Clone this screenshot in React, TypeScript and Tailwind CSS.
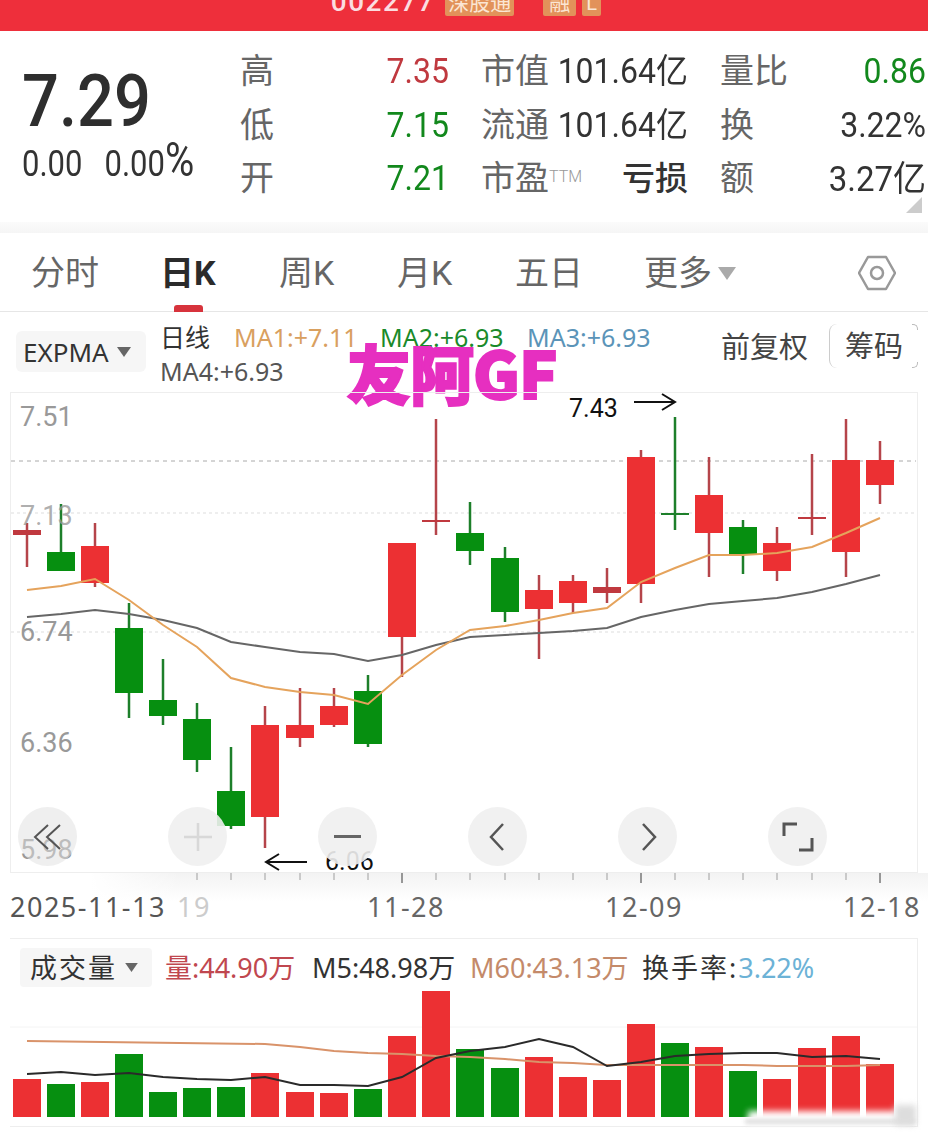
const RED = "#ec3033";
const GREEN = "#068f10";

// x, wick top, body top, body bottom, wick bottom, up?
const candles: [number, number, number, number, number, boolean][] = [
  [27, 523, 530, 535, 567, true],
  [61, 504, 552, 571, 571, false],
  [95, 523, 546, 583, 587, true],
  [129, 603, 628, 693, 718, false],
  [163, 659, 700, 716, 725, false],
  [197, 703, 719, 760, 772, false],
  [231, 747, 791, 826, 829, false],
  [265, 706, 725, 817, 848, true],
  [300, 688, 725, 738, 747, true],
  [334, 688, 706, 725, 727, true],
  [368, 675, 691, 744, 747, false],
  [402, 543, 543, 637, 677, true],
  [436, 419, 520, 522, 535, true],
  [470, 502, 533, 551, 565, false],
  [505, 547, 558, 612, 622, false],
  [539, 575, 590, 609, 659, true],
  [573, 575, 581, 603, 613, true],
  [607, 568, 587, 593, 603, true],
  [641, 450, 457, 584, 603, true],
  [675, 417, 513, 515, 530, false],
  [709, 457, 495, 533, 577, true],
  [743, 520, 527, 554, 574, false],
  [777, 527, 543, 571, 581, true],
  [812, 454, 517, 519, 535, true],
  [846, 419, 460, 552, 577, true],
  [880, 441, 460, 485, 504, true],
];

const ma1 = "27,590 61,586 95,579 129,600 163,625 197,647 231,678 265,687 300,692 334,695 368,704 402,675 436,650 470,630 505,626 539,620 573,613 607,608 641,582 675,568 709,555 743,555 777,553 812,547 846,533 880,518";
const ma2 = "27,617 61,614 95,610 129,614 163,620 197,628 231,642 265,647 300,652 334,654 368,661 402,655 436,645 470,637 505,635 539,633 573,631 607,628 641,617 675,610 709,604 743,601 777,598 812,592 846,584 880,575";

const volumes: [number, number, boolean][] = [
  [27, 1079, true], [61, 1084, false], [95, 1082, true], [129, 1054, false], [163, 1092, false],
  [197, 1088, false], [231, 1087, false], [265, 1073, true], [300, 1092, true], [334, 1093, true],
  [368, 1089, false], [402, 1036, true], [436, 991, true], [470, 1049, false], [505, 1068, false],
  [539, 1057, true], [573, 1077, true], [607, 1080, true], [641, 1024, true], [675, 1043, false],
  [709, 1047, true], [743, 1071, false], [777, 1079, true], [812, 1048, true], [846, 1036, true], [880, 1064, true],
];
const m5 = "27,1074 61,1072 95,1075 129,1073 163,1077 197,1079 231,1080 265,1077 300,1085 334,1085 368,1086 402,1077 436,1058 470,1051 505,1047 539,1039 573,1047 607,1066 641,1062 675,1056 709,1054 743,1053 777,1053 812,1057 846,1056 880,1059";
const m60 = "27,1041 265,1044 300,1047 334,1051 368,1053 402,1054 436,1056 470,1057 505,1059 539,1062 573,1063 607,1065 641,1065 675,1065 709,1065 743,1065 777,1066 812,1066 846,1066 880,1065";

const ticks = [197, 231, 265, 300, 334, 368, 402, 436, 470, 505, 539, 573, 607, 641, 675, 709, 743, 777, 812, 846, 880];

function Caret({ className }: { className: string }) {
  return (
    <svg viewBox="0 0 14 10" className={className}>
      <path d="M0 0h14L7 10z" fill="currentColor" />
    </svg>
  );
}

function Stat({ label, value, color }: { label: string; value: string; color: string }) {
  return (
    <>
      <span className="text-[34px] text-[#666]">{label}</span>
      <span className={`scale-y-[1.12] text-right text-[32px] whitespace-nowrap ${color}`}>{value}</span>
    </>
  );
}

function RoundButton({ x, children, see }: { x: string; children: React.ReactNode; see?: boolean }) {
  return (
    <div className={`absolute top-[414px] flex h-[59px] w-[59px] items-center justify-center rounded-full ${see ? "bg-[#e0e0e0]/50" : "bg-[#f0f0f0]/90"} ${x}`}>
      {children}
    </div>
  );
}

function App() {
  return (
    <div className="h-[1133px] w-[928px] overflow-hidden bg-white font-['Roboto','Noto_Sans_CJK_SC',sans-serif]">
      {/* top bar, cut off by the crop */}
      <div className="flex h-[31px] items-end justify-center overflow-hidden bg-[#ee2f3b] pb-[15px] pl-[4px]">
        <span className="text-[28px] leading-none font-medium tracking-[1.5px] text-[#fbdde0]">002277</span>
        <span className="ml-[10px] rounded-[2px] bg-[#e2925a] px-[3px] text-[21px] leading-[26px] whitespace-nowrap text-[#fbe6d4]">深股通</span>
        <span className="ml-[29px] rounded-[2px] bg-[#e2925a] px-[6px] text-[21px] leading-[26px] text-[#fbe6d4]">融</span>
        <span className="ml-[6px] w-[19px] rounded-[2px] bg-[#e2925a] pl-[4px] text-[20px] leading-[26px] text-[#fbe6d4]">L</span>
      </div>

      {/* quote */}
      <div className="relative flex h-[191px] pl-[22px]">
        <div className="w-[218px] pt-[33px]">
          <div className="origin-top-left scale-y-[1.12] text-[65px] leading-[66px] font-medium text-[#2e2e2e]">7.29</div>
          <div className="mt-[13px] flex scale-y-[1.18] items-baseline gap-[22px] text-[31px] leading-[36px] text-[#333]">
            <span>0.00</span>
            <span>
              0.00<span className="text-[40px] leading-[36px]">%</span>
            </span>
          </div>
        </div>
        <div className="grid h-fit w-[209px] grid-cols-[40px_1fr] pt-[14px] leading-[53.5px]">
          <Stat label="高" value="7.35" color="text-[#c0393f]" />
          <Stat label="低" value="7.15" color="text-[#12881c]" />
          <Stat label="开" value="7.21" color="text-[#12881c]" />
        </div>
        <div className="ml-[32px] grid h-fit w-[207px] grid-cols-[70px_1fr] pt-[14px] leading-[53.5px]">
          <span className="text-[34px] text-[#666]">市值</span>
          <span className="scale-y-[1.08] text-right text-[32px] whitespace-nowrap text-[#333]">101.64亿</span>
          <span className="text-[34px] text-[#666]">流通</span>
          <span className="scale-y-[1.08] text-right text-[32px] whitespace-nowrap text-[#333]">101.64亿</span>
          <span className="text-[34px] whitespace-nowrap text-[#666]">
            市盈<sup className="text-[16px] leading-none font-light text-[#999]">TTM</sup>
          </span>
          <span className="text-right text-[33px] font-medium text-[#333]">亏损</span>
        </div>
        <div className="ml-[32px] grid h-fit w-[206px] grid-cols-[70px_1fr] pt-[14px] leading-[53.5px]">
          <Stat label="量比" value="0.86" color="text-[#12881c]" />
          <Stat label="换" value="3.22%" color="text-[#333]" />
          <span className="text-[34px] text-[#666]">额</span>
          <span className="scale-y-[1.08] text-right text-[33px] whitespace-nowrap text-[#333]">3.27亿</span>
        </div>
        <svg viewBox="0 0 16 16" className="absolute top-[166px] right-[6px] h-[16px] w-[16px]">
          <path d="M16 0v16H0z" fill="#ccc" />
        </svg>
      </div>

      <div className="h-[11px] bg-gradient-to-b from-[#fbfbfb] to-[#f5f5f5]" />

      {/* period tabs */}
      <div className="relative flex h-[79px] items-center border-b border-[#e6e6e6] pt-[2px] text-[34px] leading-none text-[#666]">
        <span className="ml-[31px] w-[129px]">分时</span>
        <span className="w-[119px] font-bold text-[#2b2b2b]">日K</span>
        <span className="w-[118px]">周K</span>
        <span className="w-[118px]">月K</span>
        <span className="w-[129px]">五日</span>
        <span>更多</span>
        <Caret className="ml-[6px] h-[13px] w-[18px] text-[#aaa]" />
        <svg viewBox="0 0 38 38" className="ml-[122px] h-[38px] w-[38px] text-[#999]">
          <path d="M10 3h18l9 16-9 16H10L1 19z" fill="none" stroke="currentColor" strokeWidth="2.5" strokeLinejoin="round" />
          <circle cx="19" cy="19" r="6" fill="none" stroke="currentColor" strokeWidth="2.5" />
        </svg>
        <div className="absolute bottom-[-1px] left-[174px] h-[7px] w-[29px] rounded-t-[3px] bg-[#d7333c]" />
      </div>

      {/* chart legend */}
      <div className="relative flex h-[80px] pl-[16px]">
        <div className="mt-[19px] flex h-[41px] w-[130px] items-center rounded-[6px] bg-[#f6f6f6] pl-[7px] font-['Noto_Sans','Noto_Sans_CJK_SC',sans-serif] text-[26px] leading-none text-[#333]">
          EXPMA
          <Caret className="ml-[8px] h-[10px] w-[14px] text-[#666]" />
        </div>
        <div className="ml-[14px] w-[540px] pt-[8px] font-['Noto_Sans','Noto_Sans_CJK_SC',sans-serif] text-[25px] leading-[34px]">
          <div className="flex">
            <span className="w-[74px] text-[#333]">日线</span>
            <span className="w-[146px] text-[#d9a05f]">MA1:+7.11</span>
            <span className="w-[147px] text-[#1a8a2a]">MA2:+6.93</span>
            <span className="text-[#5b94b8]">MA3:+6.93</span>
          </div>
          <div className="text-[#555]">MA4:+6.93</div>
        </div>
        <span className="mt-[17px] ml-[21px] h-fit text-[29px] leading-[38px] text-[#444]">前复权</span>
        <div className="relative mt-[12px] ml-[21px] flex h-[44px] w-[89px] items-center justify-center rounded-l-[8px] border-l border-[#ccc] pt-[3px] text-[29px] leading-none text-[#444]">
          筹码
          <div className="absolute top-0 right-0 h-[6px] w-[6px] rounded-tr-[5px] border-t border-r border-[#bbb]" />
          <div className="absolute right-0 bottom-0 h-[6px] w-[6px] rounded-br-[5px] border-r border-b border-[#bbb]" />
        </div>
        <span className="absolute top-[24px] left-[347px] font-['Noto_Sans_CJK_SC',sans-serif] text-[64px] leading-[70px] font-black tracking-[-1px] whitespace-nowrap text-[#e62fc0] [-webkit-text-stroke:2px_#e62fc0]">
          友阿GF
        </span>
      </div>

      {/* candlestick chart */}
      <div className="relative mx-[10px] h-[481px] border border-[#eeeeee]">
        <svg viewBox="11 393 905 479" className="absolute inset-0 h-[479px] w-[905px]">
          <line x1="11" x2="916" y1="461" y2="461" stroke="#aaa" strokeWidth="1" strokeDasharray="4 4" />
          <line x1="11" x2="916" y1="513" y2="513" stroke="#ddd" strokeWidth="1" strokeDasharray="3 3" />
          <line x1="11" x2="916" y1="632" y2="632" stroke="#ddd" strokeWidth="1" strokeDasharray="3 3" />
          {candles.map(([x, wt, bt, bb, wb, up], i) => (
            <g key={i}>
              <line x1={x} x2={x} y1={wt} y2={wb} stroke={up ? "#b5444a" : "#1d7f2a"} strokeWidth="2.5" />
              <rect x={x - 14} y={bt} width="28" height={bb - bt} fill={bb - bt < 8 ? (up ? "#c0393f" : "#1d7f2a") : up ? RED : GREEN} />
            </g>
          ))}
          <polyline points={ma2} fill="none" stroke="#666" strokeWidth="2" />
          <polyline points={ma1} fill="none" stroke="#e5a35c" strokeWidth="2" />
          <path d="M634 402h41m-13-8 13 8-13 8" fill="none" stroke="#111" strokeWidth="2" />
          <path d="M307 862h-41m13-8-13 8 13 8" fill="none" stroke="#111" strokeWidth="2" />
        </svg>
        <span className="absolute top-[8px] left-[9px] text-[27px] leading-[32px] text-[#999]">7.51</span>
        <span className="absolute top-[107px] left-[9px] text-[27px] leading-[32px] text-[#999]/80">7.13</span>
        <span className="absolute top-[223px] left-[9px] text-[27px] leading-[32px] text-[#999]">6.74</span>
        <span className="absolute top-[334px] left-[9px] text-[27px] leading-[32px] text-[#999]">6.36</span>
        <span className="absolute top-[441px] left-[9px] text-[27px] leading-[32px] text-[#999]">5.98</span>
        <span className="absolute top-[1px] left-[558px] text-[25px] leading-[30px] text-[#111]">7.43</span>
        <span className="absolute top-[454px] left-[314px] text-[25px] leading-[30px] text-[#111]">6.06</span>

        <RoundButton x="left-[7px]" see>
          <svg viewBox="0 0 30 30" className="h-[30px] w-[30px] text-[#555]">
            <path d="M15 3 2 15l13 12M27 3 14 15l13 12" fill="none" stroke="currentColor" strokeWidth="2" />
          </svg>
        </RoundButton>
        <RoundButton x="left-[157px]">
          <svg viewBox="0 0 28 28" className="h-[28px] w-[28px] text-[#d8d8d8]">
            <path d="M14 0v28M0 14h28" stroke="currentColor" strokeWidth="2.5" />
          </svg>
        </RoundButton>
        <RoundButton x="left-[307px]">
          <div className="h-[3px] w-[27px] bg-[#666]" />
        </RoundButton>
        <RoundButton x="left-[457px]">
          <svg viewBox="0 0 16 28" className="mr-[2px] h-[28px] w-[16px] text-[#555]">
            <path d="M14 1 2 14l12 13" fill="none" stroke="currentColor" strokeWidth="2.5" />
          </svg>
        </RoundButton>
        <RoundButton x="left-[607px]">
          <svg viewBox="0 0 16 28" className="ml-[2px] h-[28px] w-[16px] text-[#555]">
            <path d="m2 1 12 13L2 27" fill="none" stroke="currentColor" strokeWidth="2.5" />
          </svg>
        </RoundButton>
        <RoundButton x="left-[757px]">
          <svg viewBox="0 0 32 30" className="h-[30px] w-[32px] text-[#555]">
            <path d="M15 2H2v12M17 28h13V16" fill="none" stroke="currentColor" strokeWidth="3" />
          </svg>
        </RoundButton>
      </div>

      {/* date axis */}
      <div className="relative h-[65px]">
        <div className="absolute top-0 right-0 left-[90px] h-[28px] bg-gradient-to-b from-[#f3f3f3] to-white" />
        <div className="absolute top-0 left-[90px] h-[28px] w-[90px] bg-gradient-to-r from-white to-transparent" />
        <svg viewBox="0 873 928 10" className="absolute top-0 left-0 h-[10px] w-[928px]">
          {ticks.map((x) => (
            <line
              key={x}
              x1={x}
              x2={x}
              y1="873"
              y2={x === 402 || x === 641 || x === 880 ? 883 : 880}
              stroke={x === 402 || x === 641 || x === 880 ? "#777" : "#bbb"}
              strokeWidth="1.5"
            />
          ))}
        </svg>
        <div className="relative flex pt-[17px] pl-[10px] font-['Noto_Sans',sans-serif] text-[27px] leading-[34px] tracking-[1.5px] text-[#666]">
          <span className="w-[167px] text-[#555]">2025-11-13</span>
          <span className="w-[190px] text-[#ccc]">19</span>
          <span className="w-[238px]">11-28</span>
          <span className="w-[238px]">12-09</span>
          <span>12-18</span>
        </div>
      </div>

      {/* volume panel */}
      <div className="relative mr-[10px] ml-[10px] h-[189px] border-y border-r border-[#eeeeee]">
        <div className="flex pt-[9px] pl-[10px] font-['Noto_Sans','Noto_Sans_CJK_SC',sans-serif] text-[27px] leading-[39px]">
          <div className="flex h-[39px] w-[132px] items-center rounded-[4px] bg-[#f6f6f6] pl-[10px] tracking-[2px] text-[#333]">
            成交量
            <Caret className="ml-[8px] h-[9px] w-[13px] text-[#666]" />
          </div>
          <span className="ml-[13px] w-[147px] text-[#c0474f]">量:44.90万</span>
          <span className="w-[158px] text-[#333]">M5:48.98万</span>
          <span className="w-[172px] text-[#c48a6a]">M60:43.13万</span>
          <span className="tracking-[2px] text-[#333]">换手率:</span>
          <span className="text-[#6cb2d6]">3.22%</span>
        </div>
        <svg viewBox="10 939 907 187" className="absolute top-0 left-0 h-[187px] w-[907px]">
          <line x1="10" x2="917" y1="1027" y2="1027" stroke="#f4f4f4" strokeWidth="1" />
          {volumes.map(([x, top, up]) => (
            <rect key={x} x={x - 14} y={top} width="28" height={1117 - top} fill={up ? RED : GREEN} />
          ))}
          <polyline points={m60} fill="none" stroke="#d9936a" strokeWidth="2" />
          <polyline points={m5} fill="none" stroke="#2a2a2a" strokeWidth="2" />
        </svg>
        {/* blurred-out watermark */}
        <div className="absolute top-[172px] left-[738px] h-[14px] w-[160px] bg-white blur-[3px]" />
        <div className="absolute top-[180px] left-[735px] h-[5px] w-[170px] bg-[#dddddd] blur-[2px]" />
        <div className="absolute top-[166px] left-[885px] h-[20px] w-[21px] bg-[#dddddd] blur-[3px]" />
      </div>
    </div>
  );
}

export default App;
